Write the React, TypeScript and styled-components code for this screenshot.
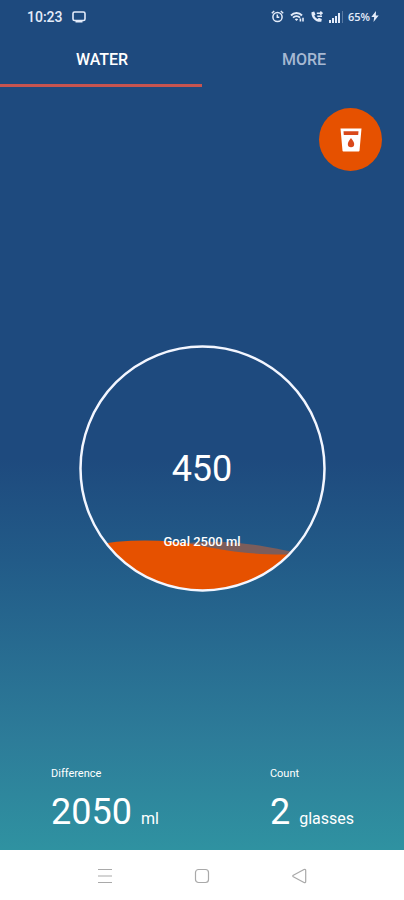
import React, { useState } from "react";
import styled, { createGlobalStyle } from "styled-components";

const GlobalStyle = createGlobalStyle`
  *, *::before, *::after { box-sizing: border-box; }
  body { margin: 0; font-family: Roboto, "Liberation Sans", sans-serif; }
  button { font: inherit; color: inherit; background: none; border: 0; padding: 0; cursor: pointer; }
`;

const Screen = styled.div`
  min-height: 100vh;
  display: flex;
  flex-direction: column;
  color: #fff;
`;

const AppArea = styled.div`
  flex: 1;
  display: flex;
  flex-direction: column;
  background: linear-gradient(#1e4a7e 0%, #1e4a7e 54%, #225b88 66%, #2d7c99 87%, #2f92a1 100%);
`;

const StatusBar = styled.header`
  height: 33px;
  padding: 0 25px 0 27px;
  display: flex;
  align-items: center;
  justify-content: space-between;
  color: #e4ecfa;
`;

const StatusGroup = styled.div<{ $gap: number }>`
  display: flex;
  align-items: center;
  gap: ${(p) => p.$gap}px;
`;

const Clock = styled.time`
  font: 500 14px/16px Roboto, sans-serif;
`;

const Battery = styled.span`
  display: flex;
  align-items: center;
  gap: 1px;
  margin-left: -2px;
  font: 600 11px/16px "Open Sans", sans-serif;
`;

const Tabs = styled.nav`
  height: 54px;
  display: grid;
  grid-template-columns: 1fr 1fr;
`;

const Tab = styled.button<{ $active: boolean }>`
  && {
    padding: 2px 0 0 2px;
    border-bottom: 3px solid ${(p) => (p.$active ? "#c75450" : "transparent")};
    color: ${(p) => (p.$active ? "#fff" : "#a6b8d2")};
    font-size: 16px;
    font-weight: 500;
  }
`;

const Main = styled.main`
  flex: 1;
  display: grid;
  grid-template-rows: 1fr auto 1fr;
`;

const AddButton = styled.button`
  && {
    justify-self: end;
    width: 63px;
    height: 63px;
    margin: 21px 22px 0 0;
    border-radius: 50%;
    background: #e65100;
    display: grid;
    place-items: center;
  }
`;

const Dial = styled.section`
  justify-self: center;
  width: 247px;
  height: 247px;
  display: grid;
  border-radius: 50%;
  > * { grid-area: 1 / 1; }
`;

const DialText = styled.div`
  z-index: 1;
  padding-top: 102px;
  display: flex;
  flex-direction: column;
  align-items: center;
  gap: 42px;
`;

const Amount = styled.strong`
  font-size: 36px;
  line-height: 44px;
  font-weight: 400;
`;

const Goal = styled.span`
  font-size: 13px;
  line-height: 18px;
  font-weight: 500;
`;

const Stats = styled.dl`
  align-self: end;
  margin: 0;
  padding: 0 50px 16px 51px;
  display: flex;
  justify-content: space-between;
`;

const StatLabel = styled.dt`
  font-size: 11px;
  line-height: 14px;
`;

const StatValue = styled.dd`
  margin: 9px 0 0;
  display: flex;
  align-items: baseline;
  gap: 9px;
  font-size: 36px;
  line-height: 44px;
`;

const Unit = styled.span`
  font-size: 16px;
  line-height: 20px;
`;

const SystemNav = styled.nav`
  height: 50px;
  padding: 1px 57px 0;
  display: grid;
  grid-template-columns: repeat(3, 1fr);
  background: #fff;
`;

const NavButton = styled.button`
  display: grid;
  place-items: center;
`;

const CastIcon = () => (
  <svg width="14" height="12" viewBox="0 0 14 12" fill="none" stroke="currentColor" strokeWidth="1.6">
    <rect x="1" y="1" width="12" height="8.500" rx="1.6" />
    <path d="M3.500 10.700h7" />
  </svg>
);

const AlarmIcon = () => (
  <svg width="13" height="13" viewBox="0 0 13 13" fill="none" stroke="currentColor" strokeWidth="1.5">
    <circle cx="6.5" cy="7" r="4.6" />
    <path d="M6.3 4.6v2.7h2M.8 3.2 3.2 1M12.2 3.2 9.8 1" />
  </svg>
);

const WifiIcon = () => (
  <svg width="15" height="12" viewBox="0 0 15 12" fill="none" stroke="currentColor">
    <path d="M1 4.5c3-3.3 8-3.3 11 0M3 6.7c2-2 5-2 7 0" strokeWidth="1.9" />
    <path d="M4.8 8.2c1-.9 2.4-.9 3.4 0L6.5 10z" fill="currentColor" stroke="none" />
    <path d="M10.4 10.6V7.5M13 6.8v3.8" strokeWidth="1.6" />
  </svg>
);

const CallIcon = () => (
  <svg width="12" height="12" viewBox="0 0 12 12" fill="none" stroke="currentColor">
    <path d="M.5 1.200 3.200.6l1.300 3-1.200 1c.6 1.500 1.600 2.600 3.200 3.300l1.300-1.200 3 1.400-.5 2.700C5 11.500 0 7 .5 1.200z" fill="currentColor" stroke="none" />
    <path d="M5.800 2.200h5M9.300.6l1.700 1.600-1.700 1.600M11 5.300H6.300" strokeWidth="1.500" />
  </svg>
);

const SignalIcon = () => (
  <svg width="15" height="12" viewBox="0 0 15 12" fill="currentColor">
    <rect x="0" y="9" width="2" height="3" />
    <rect x="3" y="7" width="2" height="5" />
    <rect x="6" y="5" width="2" height="7" />
    <rect x="9" y="2" width="2" height="10" />
    <rect x="13" y="0" width="1" height="12" opacity="0.3" />
  </svg>
);

const BoltIcon = () => (
  <svg width="8" height="11" viewBox="0 0 8 11" fill="currentColor">
    <path d="M5 0 .3 6h2.900L2.500 11l5.200-6.500H4.800z" />
  </svg>
);

const GlassIcon = () => (
  <svg width="22" height="24" viewBox="0 0 22 24">
    <path d="M.5.5h21l-2 22.200a.9.9 0 0 1-.9.800H3.400a.9.9 0 0 1-.9-.8z" fill="#fff" />
    <path d="M3.500 3.300h15l-.3 3.700H3.800z" fill="#d9481a" />
    <path d="M11 10c1.800 2.300 3.200 4.200 3.200 6a3.200 3.200 0 0 1-6.400 0c0-1.800 1.400-3.700 3.200-6z" fill="#d9481a" />
  </svg>
);

const WaterGauge = () => (
  <svg width="247" height="247" viewBox="0 0 247 247" aria-hidden="true">
    <defs>
      <clipPath id="dial">
        <circle cx="123.500" cy="123.500" r="122" />
      </clipPath>
    </defs>
    <g clipPath="url(#dial)">
      <path d="M100 199C140 194 170 197 222 209V216H100z" fill="#7b5d5b" />
      <path d="M0 203C45 193 85 194 123 201C155 207 180 212 247 208V247H0z" fill="#e65100" />
    </g>
    <circle cx="123.500" cy="123.500" r="122" fill="none" stroke="#f3f6ff" strokeWidth="2.500" />
  </svg>
);

const MenuIcon = () => (
  <svg width="16" height="16" viewBox="0 0 16 16" stroke="#a9a9a9" strokeWidth="1.200">
    <path d="M1 1.500h14M1 8h14M1 14.500h14" />
  </svg>
);

const HomeIcon = () => (
  <svg width="16" height="16" viewBox="0 0 16 16" fill="none" stroke="#a9a9a9" strokeWidth="1.200">
    <rect x="1.500" y="1.500" width="13" height="13" rx="3" />
  </svg>
);

const BackIcon = () => (
  <svg width="16" height="16" viewBox="0 0 16 16" fill="none" stroke="#a9a9a9" strokeWidth="1.200" strokeLinejoin="round">
    <path d="M2.300 7.300 13 1.500q1.700-.6 1.700 1v11q0 1.600-1.700 1L2.300 8.700q-1-.7 0-1.400z" />
  </svg>
);

const stats = [
  { label: "Difference", value: "2050", unit: "ml" },
  { label: "Count", value: "2", unit: "glasses" },
];

export default function App() {
  const [tab, setTab] = useState("WATER");
  return (
    <>
      <GlobalStyle />
      <Screen>
        <AppArea>
          <StatusBar>
            <StatusGroup $gap={9}>
              <Clock>10:23</Clock>
              <CastIcon />
            </StatusGroup>
            <StatusGroup $gap={6}>
              <AlarmIcon />
              <WifiIcon />
              <CallIcon />
              <SignalIcon />
              <Battery>
                65%
                <BoltIcon />
              </Battery>
            </StatusGroup>
          </StatusBar>
          <Tabs>
            {["WATER", "MORE"].map((name) => (
              <Tab key={name} $active={tab === name} onClick={() => setTab(name)}>
                {name}
              </Tab>
            ))}
          </Tabs>
          <Main>
            <AddButton aria-label="Add a glass of water">
              <GlassIcon />
            </AddButton>
            <Dial>
              <WaterGauge />
              <DialText>
                <Amount>450</Amount>
                <Goal>Goal 2500 ml</Goal>
              </DialText>
            </Dial>
            <Stats>
              {stats.map((s) => (
                <div key={s.label}>
                  <StatLabel>{s.label}</StatLabel>
                  <StatValue>
                    {s.value}
                    <Unit>{s.unit}</Unit>
                  </StatValue>
                </div>
              ))}
            </Stats>
          </Main>
        </AppArea>
        <SystemNav>
          <NavButton aria-label="Recent apps"><MenuIcon /></NavButton>
          <NavButton aria-label="Home"><HomeIcon /></NavButton>
          <NavButton aria-label="Back"><BackIcon /></NavButton>
        </SystemNav>
      </Screen>
    </>
  );
}
